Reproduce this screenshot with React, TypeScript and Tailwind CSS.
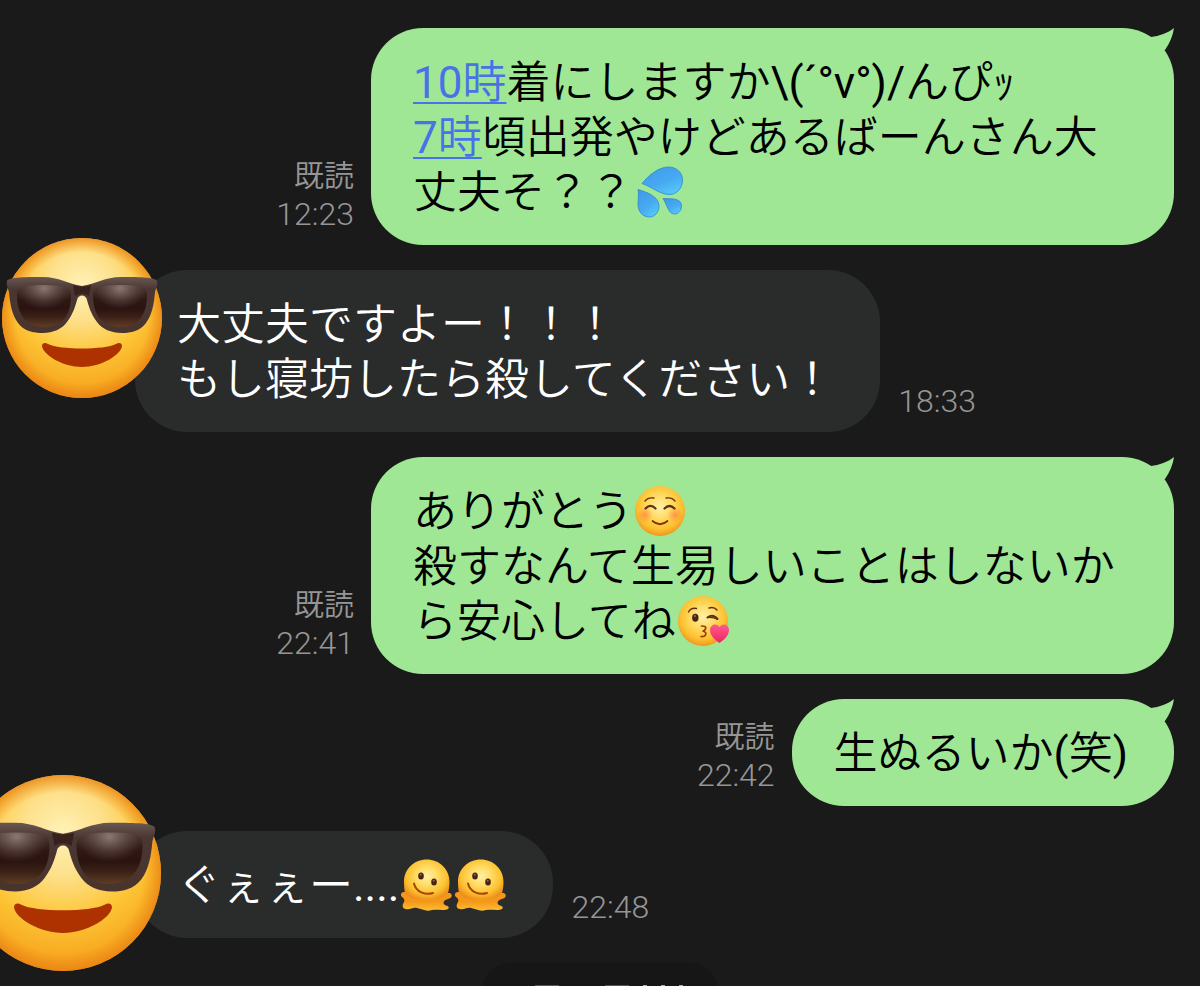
import type { ReactNode } from 'react';

// Gradients shared by every face and drop on the page
const EmojiDefs = () => (
  <svg className="absolute h-0 w-0" aria-hidden="true">
    <defs>
      <radialGradient id="face" cx="0.5" cy="0.42" r="0.6">
        <stop offset="0" stopColor="#fff0a8" />
        <stop offset="0.4" stopColor="#ffdb62" />
        <stop offset="0.75" stopColor="#fcc02f" />
        <stop offset="1" stopColor="#ee8f1c" />
      </radialGradient>
      <radialGradient id="bigFace" cx="0.5" cy="0.3" r="0.72">
        <stop offset="0" stopColor="#fff2b8" />
        <stop offset="0.3" stopColor="#fde08a" />
        <stop offset="0.6" stopColor="#fdc637" />
        <stop offset="0.85" stopColor="#f8ab22" />
        <stop offset="1" stopColor="#f0951c" />
      </radialGradient>
      <radialGradient id="bigRim" cx="0.5" cy="0.5" r="0.5">
        <stop offset="0.82" stopColor="#ec8a16" stopOpacity="0" />
        <stop offset="1" stopColor="#e88012" stopOpacity="0.75" />
      </radialGradient>
      <linearGradient id="frame" x1="0" y1="0" x2="0" y2="1">
        <stop offset="0" stopColor="#6b5751" />
        <stop offset="0.22" stopColor="#4a3632" />
        <stop offset="1" stopColor="#49342d" />
      </linearGradient>
      <linearGradient id="lens" x1="0" y1="0" x2="0" y2="1">
        <stop offset="0" stopColor="#4c3833" />
        <stop offset="0.35" stopColor="#2f1814" />
        <stop offset="0.55" stopColor="#2a1310" />
        <stop offset="0.75" stopColor="#3a2016" />
        <stop offset="1" stopColor="#5f3d24" />
      </linearGradient>
      <radialGradient id="shine" cx="0.5" cy="0.08" r="0.5">
        <stop offset="0" stopColor="#93807b" stopOpacity="0.9" />
        <stop offset="1" stopColor="#6b5650" stopOpacity="0" />
      </radialGradient>
      <radialGradient id="blush">
        <stop offset="0" stopColor="#ff7043" stopOpacity="0.6" />
        <stop offset="1" stopColor="#ff7043" stopOpacity="0" />
      </radialGradient>
      <linearGradient id="drop" x1="0.2" y1="0" x2="0.8" y2="1">
        <stop offset="0" stopColor="#3f9bea" />
        <stop offset="0.55" stopColor="#48a9f2" />
        <stop offset="1" stopColor="#55ccfa" />
      </linearGradient>
      <linearGradient id="heart" x1="0" y1="0" x2="0" y2="1">
        <stop offset="0" stopColor="#ff5c8d" />
        <stop offset="1" stopColor="#f02460" />
      </linearGradient>
      <linearGradient id="puddle" x1="0" y1="0" x2="0" y2="1">
        <stop offset="0.5" stopColor="#f4971a" />
        <stop offset="1" stopColor="#ffbd30" />
      </linearGradient>
    </defs>
  </svg>
);

const leftLens = 'M15 57 C15 49 22 47 42 47 C62 47 69 50 69 57 C69 75 62 89 42 89 C22 89 15 74 15 57 Z';
const rightLens = 'M145 57 C145 49 138 47 118 47 C98 47 91 50 91 57 C91 75 98 89 118 89 C138 89 145 74 145 57 Z';

const Sunglasses = ({ className }: { className: string }) => (
  <svg viewBox="0 0 160 160" className={className} aria-hidden="true">
    <circle cx="80" cy="80" r="80" fill="url(#bigFace)" />
    <circle cx="80" cy="80" r="80" fill="url(#bigRim)" />
    <path
      d="M5 43 C6 39 26 39 41 39 C57 39 66 46 80 48 C94 46 103 39 119 39 C134 39 154 39 155 43 C156 47 154 50 153 54 C152 66 150 77 144 85 C138 93 129 95 120 95 C109 95 100 91 95 84 C89 76 87 69 85 62 C84 56 76 56 75 62 C73 69 71 76 65 84 C60 91 51 95 41 95 C31 95 22 93 16 85 C10 77 8 66 7 54 C6 50 4 47 5 43 Z"
      fill="url(#frame)"
    />
    <path d="M71 47 Q80 50 89 47 L87 58 Q80 53 73 58 Z" fill="#38211d" />
    <path d={leftLens} fill="url(#lens)" />
    <path d={leftLens} fill="url(#shine)" />
    <path d={rightLens} fill="url(#lens)" />
    <path d={rightLens} fill="url(#shine)" />
    <path d="M40 108 C40 105 43 104 46 106 C57 112 103 112 114 106 C117 104 120 105 120 108 C119 117 99 129 80 129 C61 129 41 117 40 108 Z" fill="#ad3200" />
  </svg>
);

const emojiClass = '-mb-1 -mt-3 inline-block h-[54px] w-[54px] align-middle';

const Smiling = () => (
  <svg viewBox="0 0 54 54" className={emojiClass} aria-hidden="true">
    <circle cx="27" cy="27" r="25" fill="url(#face)" />
    <circle cx="12" cy="31" r="8" fill="url(#blush)" />
    <circle cx="42" cy="31" r="8" fill="url(#blush)" />
    <g fill="none" stroke="#5c3015" strokeLinecap="round">
      <path d="M12 17 Q15 13 21 14" strokeWidth="1.3" />
      <path d="M42 17 Q39 13 33 14" strokeWidth="1.3" />
      <path d="M12.5 24.5 Q17.5 19.5 22.5 24.5" strokeWidth="2.2" />
      <path d="M31.5 24.5 Q36.5 19.5 41.5 24.5" strokeWidth="2.2" />
      <path d="M19.5 37 Q27 43.5 34.5 37" strokeWidth="1.8" stroke="#8a3206" />
    </g>
  </svg>
);

const Kissing = () => (
  <svg viewBox="0 0 54 54" className={emojiClass} aria-hidden="true">
    <circle cx="27" cy="27" r="25" fill="url(#face)" />
    <ellipse cx="19.3" cy="23.7" rx="3.2" ry="4" fill="#4a2412" />
    <ellipse cx="19" cy="22" rx="1.2" ry="1" fill="#8b6a58" />
    <g fill="none" stroke="#5c3015" strokeLinecap="round">
      <path d="M12.5 18 Q15 13.5 20.5 14.5" strokeWidth="1.4" />
      <path d="M33 14 Q38 12.5 41 16" strokeWidth="1.4" />
      <path d="M31.5 23.5 Q37 19.5 41.5 25" strokeWidth="2" />
      <path d="M31.5 23.5 Q37 23 41.5 25" strokeWidth="1.4" />
      <path d="M25.5 32 Q31 32 29.5 35 Q28.5 37 26.5 37 Q31 38 29.5 41 Q28 43 25 42.5" strokeWidth="1.7" stroke="#a13a06" />
    </g>
    <path d="M43.5 49 C39 46 34 41.5 34 36 C34 30 41 28.5 43.5 33 C46 28.5 53 30 53 36 C53 41.5 48 46 43.5 49 Z" fill="url(#heart)" />
  </svg>
);

const Melting = () => (
  <svg viewBox="0 0 54 54" className={emojiClass} aria-hidden="true">
    <path
      d="M5 34 C2 34 1 37 3 39 C5 40 6 42 5 44 C3 47 3 51 7 51 C11 52 14 49 18 50 C23 51 27 54 33 52 C39 51 45 53 49 51 C51 49 49 48 46 47 C43 45 45 42 49 41 C53 40 54 37 51 35 Z"
      fill="url(#puddle)"
    />
    <path d="M5 24 C5 11 15 1.5 27.7 1.5 C40.5 1.5 50.5 11 50.5 24 C50.5 27 50 32 49 35 C43 42 36 40 28 41 C19 42 11 42 6 35 C5.3 32 5 27 5 24 Z" fill="url(#face)" />
    <ellipse cx="22" cy="18" rx="2.8" ry="3.5" fill="#4a2412" />
    <ellipse cx="35" cy="24" rx="2.8" ry="3.5" fill="#4a2412" />
    <circle cx="21.7" cy="16.7" r="0.9" fill="#94715c" />
    <circle cx="34.7" cy="22.7" r="0.9" fill="#94715c" />
    <path d="M15 25.5 C17 34 26 37.5 34 35" fill="none" stroke="#a8430a" strokeWidth="2" strokeLinecap="round" />
  </svg>
);

const Sweat = () => (
  <svg viewBox="0 0 54 54" className={emojiClass} aria-hidden="true">
    <g fill="url(#drop)" stroke="#2f86cf" strokeWidth="0.8">
      <path d="M9 18.5 C15 11 25 2 35.5 2 C44 2 49.5 8 49.5 15 C49.5 23 44 29.5 36.5 29.5 C27 29.5 19 22 9 18.5 Z" />
      <path d="M5 24.5 C13 27 26 31 26 41 C26 47 22 52 16.5 52 C9 52 5 46 5 39 C5 34 6 29 5 24.5 Z" />
      <path d="M30 33.5 C37 34 48.5 32.5 48.5 41 C48.5 45.5 45.5 49 41.5 49 C35 49 34 39 30 33.5 Z" />
    </g>
  </svg>
);

type MessageProps = {
  time: string;
  children: ReactNode;
};

const Sent = ({ time, children }: MessageProps) => (
  <div className="flex items-end justify-end gap-[17px] pr-[26px]">
    <div className="shrink-0 pb-[11px] text-right text-[30px] font-light leading-[39px] text-[#969696]">
      <p>既読</p>
      <time className="block text-[32px]">{time}</time>
    </div>
    <div className="relative max-w-[803px] rounded-[52px] bg-[#9fe795] pb-6 pl-[42px] pr-[46px] pt-7 text-black">
      {children}
      <svg viewBox="0 0 52 52" className="absolute right-0 top-0 h-[52px] w-[52px]" aria-hidden="true">
        <path d="M29 9 C37 8 46 5 52 0 C51 7 48 15 43 22 L30 24 Z" fill="#9fe795" />
      </svg>
    </div>
  </div>
);

const Received = ({ time, sticker, children }: MessageProps & { sticker: ReactNode }) => (
  <div className="relative flex items-end gap-[18px] pl-[135px]">
    <div className="max-w-[803px] rounded-[52px] bg-[#2a2b2b] pb-6 pl-[42px] pr-[46px] pt-7 text-white">{children}</div>
    <time className="shrink-0 pb-[11px] text-[32px] font-light leading-[39px] text-[#969696]">{time}</time>
    {sticker}
  </div>
);

const TimeLink = ({ children }: { children: ReactNode }) => (
  <a
    href="#"
    className="inline-block text-[#4a72e8] underline decoration-2 underline-offset-4 [text-decoration-skip-ink:none]"
  >
    {children}
  </a>
);

export default function App() {
  return (
    <main className="relative flex h-screen flex-col gap-[25px] overflow-hidden bg-[#1a1a1a] pt-[28px] font-['Roboto','Noto_Sans_CJK_JP_DemiLight','Noto_Sans_CJK_JP',sans-serif] text-[44px] leading-[55px]">
      <EmojiDefs />

      <Sent time="12:23">
        <p>
          <TimeLink>10時</TimeLink>着にしますか\(´°v°)/んぴｯ
        </p>
        <p>
          <TimeLink>7時</TimeLink>頃出発やけどあるばーんさん大丈夫そ？？
          <Sweat />
        </p>
      </Sent>

      <Received time="18:33" sticker={<Sunglasses className="absolute -top-8 left-[2px] h-40 w-40" />}>
        <p>大丈夫ですよー！！！</p>
        <p>もし寝坊したら殺してください！</p>
      </Received>

      <Sent time="22:41">
        <p>
          ありがとう
          <Smiling />
        </p>
        <p>
          殺すなんて生易しいことはしないから安心してね
          <Kissing />
        </p>
      </Sent>

      <Sent time="22:42">
        <p>生ぬるいか(笑)</p>
      </Sent>

      <Received time="22:48" sticker={<Sunglasses className="absolute -left-[35px] -top-14 h-[196px] w-[196px]" />}>
        <p>
          ぐぇぇー....
          <Melting />
          <Melting />
        </p>
      </Received>

      {/* Date chip, cut off by the bottom edge */}
      <div className="flex h-14 w-[236px] shrink-0 items-start gap-[14px] self-center rounded-[28px] bg-[#161616] pl-[53px] pt-[22px]">
        <span className="mr-8 h-px w-6 bg-[#555555]" />
        <span className="h-px w-6 bg-[#555555]" />
        <span className="h-px w-1 bg-[#aaaaaa]" />
        <span className="h-px w-1 bg-[#aaaaaa]" />
        <span className="h-px w-1 bg-[#aaaaaa]" />
      </div>
    </main>
  );
}
